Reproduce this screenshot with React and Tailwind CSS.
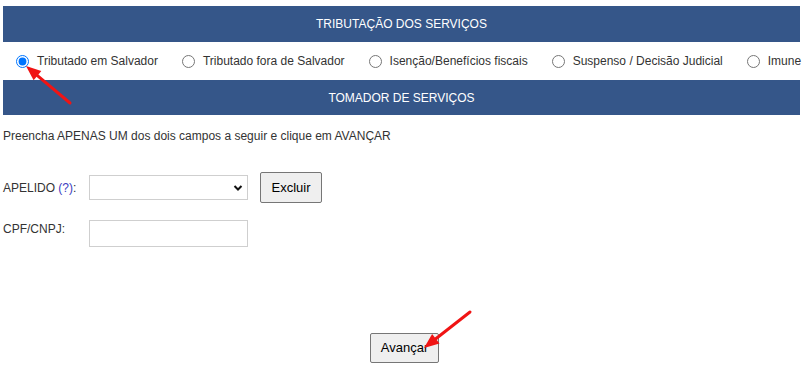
import React from "react";

const options = [
  "Tributado em Salvador",
  "Tributado fora de Salvador",
  "Isenção/Benefícios fiscais",
  "Suspenso / Decisão Judicial",
  "Imune",
];

function Arrow({ x1, y1, x2, y2 }) {
  const dx = x2 - x1;
  const dy = y2 - y1;
  const len = Math.hypot(dx, dy);
  const ux = dx / len;
  const uy = dy / len;
  const hl = 15;
  const hw = 6;
  const bx = x2 - ux * hl;
  const by = y2 - uy * hl;
  const px = -uy;
  const py = ux;
  return (
    <g>
      <line x1={x1} y1={y1} x2={bx + ux * 2} y2={by + uy * 2} stroke="#f01414" strokeWidth="3" strokeLinecap="round" />
      <polygon
        points={`${x2},${y2} ${bx + px * hw},${by + py * hw} ${bx - px * hw},${by - py * hw}`}
        fill="#f01414"
      />
    </g>
  );
}

export default function App() {
  return (
    <div className="relative w-[804px] h-[381px] bg-white font-['Liberation_Sans',Arial,sans-serif] text-[12px] leading-[14px] text-[#333] overflow-hidden">
      <div className="pt-[6px] pl-[3px] pr-[4px]">
        <div className="h-[36px] bg-[#355689] text-white text-[12px] flex items-center justify-center">
          TRIBUTAÇÃO DOS SERVIÇOS
        </div>
        <div className="h-[38px] flex items-center pl-[13px] gap-[24px] whitespace-nowrap">
          {options.map((o, i) => (
            <label key={o} className="flex items-center gap-[8px]">
              <input
                type="radio"
                name="trib"
                defaultChecked={i === 0}
                className="m-0 w-[13px] h-[13px]"
              />
              <span>{o}</span>
            </label>
          ))}
        </div>
        <div className="h-[35px] bg-[#355689] text-white text-[12px] flex items-center justify-center">
          TOMADOR DE SERVIÇOS
        </div>
        <p className="mt-[14px]">
          Preencha APENAS UM dos dois campos a seguir e clique em AVANÇAR
        </p>
        <div className="mt-[29px] flex items-center h-[31px]">
          <span className="w-[86px]">
            APELIDO <span className="text-[#3c3cc0]">(?)</span>:
          </span>
          <div className="relative w-[159px] h-[25px] border border-[#cfcfcf] bg-white">
            <svg className="absolute right-[4px] top-[8px]" width="10" height="8" viewBox="0 0 10 8">
              <path d="M1.5 2 L5 5.5 L8.5 2" fill="none" stroke="#111" strokeWidth="2" />
            </svg>
          </div>
          <button className="ml-[12px] w-[62px] h-[31px] bg-[#efefef] border border-[#767676] rounded-[2px] text-[13px] text-black">
            Excluir
          </button>
        </div>
        <div className="mt-[17px] flex items-start">
          <span className="w-[86px] pt-[2px]">CPF/CNPJ:</span>
          <div className="w-[159px] h-[27px] border border-[#cfcfcf] bg-white" />
        </div>
        <div className="mt-[86px] flex justify-center pl-[6px]">
          <button className="w-[69px] h-[30px] bg-[#efefef] border border-[#767676] rounded-[2px] text-[13px] text-black">
            Avançar
          </button>
        </div>
      </div>
      <svg className="absolute left-0 top-0 pointer-events-none" width="804" height="381">
        <Arrow x1={70} y1={103} x2={26} y2={66} />
        <Arrow x1={470} y1={312} x2={424} y2={348} />
      </svg>
    </div>
  );
}
